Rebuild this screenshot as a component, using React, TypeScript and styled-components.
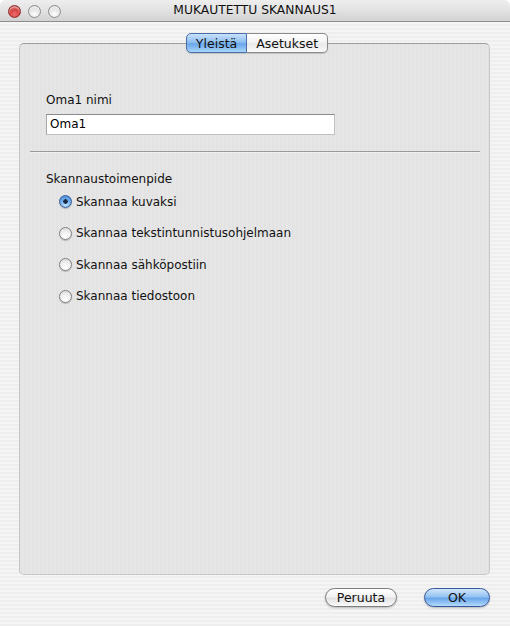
import React from "react";
import styled, { createGlobalStyle } from "styled-components";

const Global = createGlobalStyle`
  html, body { margin: 0; padding: 0; }
  body { width: 510px; height: 626px; overflow: hidden; font-family: "DejaVu Sans", "Liberation Sans", sans-serif; }
`;

const Window = styled.div`
  width: 510px;
  height: 626px;
  display: flex;
  flex-direction: column;
  background: repeating-linear-gradient(to bottom, #eeeeee 0px, #eeeeee 2px, #f5f5f5 2px, #f5f5f5 4px);
  border-radius: 6px 6px 0 0;
  overflow: hidden;
`;

const TitleBar = styled.div`
  height: 20px;
  flex: none;
  display: flex;
  align-items: center;
  position: relative;
  background: linear-gradient(to bottom, #eeeeee 0%, #e2e2e2 50%, #d2d2d2 100%);
  border-bottom: 1px solid #8e8e8e;
  box-sizing: content-box;
  padding-top: 1px;
`;

const Lights = styled.div`
  display: flex;
  gap: 7px;
  padding-left: 8px;
`;

const Light = styled.span<{ $red?: boolean }>`
  width: 13px;
  height: 13px;
  border-radius: 50%;
  box-sizing: border-box;
  border: 1px solid ${(p) => (p.$red ? "#8a2b2b" : "#8c8c8c")};
  background: ${(p) =>
    p.$red
      ? "radial-gradient(circle at 50% 75%, #f07070 0%, #d13434 55%, #a71e1e 100%)"
      : "radial-gradient(circle at 50% 75%, #ffffff 0%, #e2e2e2 55%, #c2c2c2 100%)"};
  box-shadow: inset 0 2px 2px rgba(255, 255, 255, 0.6);
`;

const Title = styled.div`
  position: absolute;
  left: 0;
  right: 0;
  top: 3px;
  text-align: center;
  font-size: 12.3px;
  color: #111;
  pointer-events: none;
`;

const Body = styled.div`
  flex: 1;
  display: flex;
  flex-direction: column;
  padding: 11px 20px 0 19px;
`;

const Tabs = styled.div`
  display: flex;
  justify-content: center;
  margin-bottom: -10px;
  position: relative;
  z-index: 1;
  padding-left: 5px;
`;

const Tab = styled.div<{ $active?: boolean; $pos: "left" | "right" }>`
  height: 20px;
  box-sizing: border-box;
  display: flex;
  align-items: center;
  justify-content: center;
  font-size: 12.5px;
  color: #111;
  padding: 0 ${(p) => (p.$pos === "left" ? "9px" : "9px")};
  border: 1px solid ${(p) => (p.$active ? "#4a6fa8" : "#8a8a8a")};
  border-left-width: ${(p) => (p.$pos === "right" ? "0" : "1px")};
  border-radius: ${(p) => (p.$pos === "left" ? "5px 0 0 5px" : "0 5px 5px 0")};
  background: ${(p) =>
    p.$active
      ? "linear-gradient(to bottom, #c9e1fb 0%, #8fbff0 45%, #6aa6ea 55%, #a9d6fb 100%)"
      : "linear-gradient(to bottom, #ffffff 0%, #f4f4f4 45%, #e9e9e9 55%, #fafafa 100%)"};
  box-shadow: 0 1px 1px rgba(0, 0, 0, 0.15);
`;

const Panel = styled.div`
  height: 532px;
  box-sizing: border-box;
  border: 1px solid #c6c6c6;
  border-top-color: #9c9c9c;
  border-radius: 5px;
  background: repeating-linear-gradient(to right, #e3e3e3 0px, #e3e3e3 2px, #e6e6e6 2px, #e6e6e6 4px);
  padding: 49px 9px 0 10px;
  display: flex;
  flex-direction: column;
`;

const Section = styled.div`
  padding-left: 16px;
  display: flex;
  flex-direction: column;
`;

const Label = styled.div`
  font-size: 12px;
  color: #111;
  line-height: 15px;
`;

const Input = styled.div`
  margin-top: 6px;
  width: 289px;
  height: 21px;
  box-sizing: border-box;
  background: #fff;
  border: 1px solid #c0c0c0;
  border-top-color: #8a8a8a;
  border-left-color: #a8a8a8;
  font-size: 12px;
  line-height: 19px;
  padding-left: 3px;
  color: #000;
`;

const Separator = styled.div`
  margin-top: 16px;
  height: 1px;
  background: #9a9a9a;
  width: 450px;
  border-bottom: 1px solid #f0f0f0;
`;

const GroupLabel = styled(Label)`
  margin-top: 19px;
`;

const RadioList = styled.div`
  display: flex;
  flex-direction: column;
  gap: 16.6px;
  margin-top: 7px;
  padding-left: 13px;
`;

const RadioRow = styled.div`
  display: flex;
  align-items: center;
  gap: 4px;
  height: 15px;
  font-size: 12px;
  color: #111;
`;

const RadioDot = styled.span<{ $on?: boolean }>`
  width: 13px;
  height: 13px;
  border-radius: 50%;
  box-sizing: border-box;
  border: 1px solid ${(p) => (p.$on ? "#3a5d98" : "#808080")};
  background: ${(p) =>
    p.$on
      ? "radial-gradient(circle at 50% 50%, #1a2a44 0, #1a2a44 2px, transparent 2.5px), radial-gradient(circle at 50% 80%, #bfe2ff 0%, #6aa8ea 55%, #3f7fcf 100%)"
      : "radial-gradient(circle at 50% 80%, #ffffff 0%, #f0f0f0 50%, #d4d4d4 100%)"};
  box-shadow: 0 1px 1px rgba(0, 0, 0, 0.2);
  flex: none;
`;

const Footer = styled.div`
  display: flex;
  justify-content: flex-end;
  gap: 27px;
  margin-top: 13px;
`;

const Button = styled.div<{ $primary?: boolean; $w: number }>`
  width: ${(p) => p.$w}px;
  height: 19px;
  box-sizing: border-box;
  border-radius: 10px;
  display: flex;
  align-items: center;
  justify-content: center;
  font-size: 12.5px;
  color: #111;
  border: 1px solid ${(p) => (p.$primary ? "#35589a" : "#7d7d7d")};
  background: ${(p) =>
    p.$primary
      ? "linear-gradient(to bottom, #d2e7fc 0%, #94c2f1 45%, #6aa5ea 55%, #b3dafc 100%)"
      : "linear-gradient(to bottom, #ffffff 0%, #f2f2f2 45%, #e2e2e2 55%, #fbfbfb 100%)"};
  box-shadow: 0 1px 2px rgba(0, 0, 0, 0.25);
`;

const options = [
  "Skannaa kuvaksi",
  "Skannaa tekstintunnistusohjelmaan",
  "Skannaa sähköpostiin",
  "Skannaa tiedostoon",
];

export default function App() {
  return (
    <>
      <Global />
      <Window>
        <TitleBar>
          <Lights>
            <Light $red />
            <Light />
            <Light />
          </Lights>
          <Title>MUKAUTETTU SKANNAUS1</Title>
        </TitleBar>
        <Body>
          <Tabs>
            <Tab $active $pos="left">Yleistä</Tab>
            <Tab $pos="right">Asetukset</Tab>
          </Tabs>
          <Panel>
            <Section>
              <Label>Oma1 nimi</Label>
              <Input>Oma1</Input>
            </Section>
            <Separator />
            <Section>
              <GroupLabel>Skannaustoimenpide</GroupLabel>
              <RadioList>
                {options.map((o, i) => (
                  <RadioRow key={o}>
                    <RadioDot $on={i === 0} />
                    {o}
                  </RadioRow>
                ))}
              </RadioList>
            </Section>
          </Panel>
          <Footer>
            <Button $w={72}>Peruuta</Button>
            <Button $primary $w={66}>OK</Button>
          </Footer>
        </Body>
      </Window>
    </>
  );
}
